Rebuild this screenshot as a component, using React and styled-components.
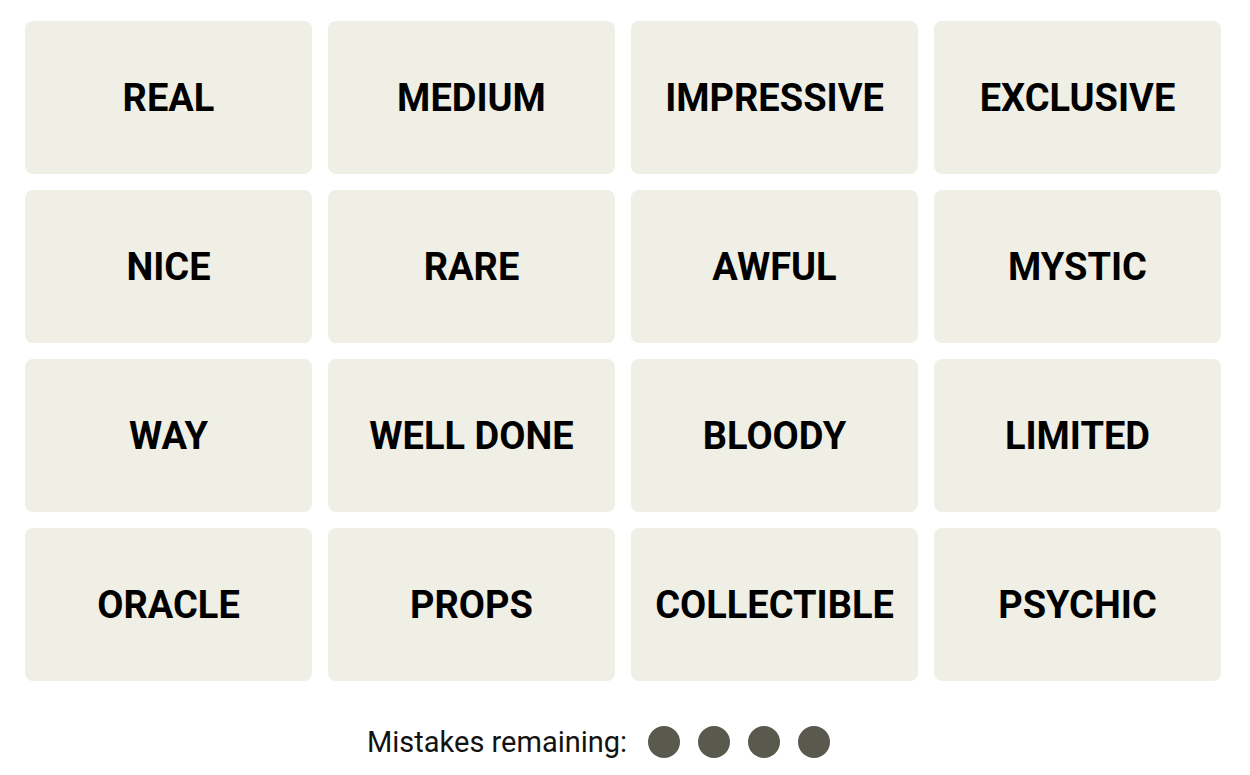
import React from 'react';
import styled, { createGlobalStyle } from 'styled-components';

const GlobalStyle = createGlobalStyle`
  body {
    margin: 0;
    background: #ffffff;
    font-family: 'Roboto', 'Liberation Sans', sans-serif;
  }
`;

const Page = styled.div`
  width: 1250px;
  height: 775px;
  padding: 21px 0 0 25px;
  box-sizing: border-box;
`;

const Board = styled.div`
  display: grid;
  grid-template-columns: repeat(4, 287px);
  grid-auto-rows: 153px;
  gap: 16px;
`;

const Tile = styled.button`
  display: flex;
  align-items: center;
  justify-content: center;
  border: none;
  border-radius: 8px;
  background: #efefe6;
  color: #000;
  font-family: 'Roboto', 'Liberation Sans', sans-serif;
  font-weight: 700;
  font-size: 38px;
  text-transform: uppercase;
  padding: 0;
  cursor: pointer;
`;

const Footer = styled.div`
  display: flex;
  align-items: center;
  margin-top: 45px;
  padding-left: 342px;
  gap: 21px;
`;

const Label = styled.span`
  font-size: 29px;
  color: #121212;
  line-height: 32px;
`;

const Dots = styled.div`
  display: flex;
  gap: 18px;
`;

const Dot = styled.span`
  width: 32px;
  height: 32px;
  border-radius: 50%;
  background: #5a594e;
`;

const words = [
  'REAL', 'MEDIUM', 'IMPRESSIVE', 'EXCLUSIVE',
  'NICE', 'RARE', 'AWFUL', 'MYSTIC',
  'WAY', 'WELL DONE', 'BLOODY', 'LIMITED',
  'ORACLE', 'PROPS', 'COLLECTIBLE', 'PSYCHIC',
];

export default function App() {
  return (
    <>
      <GlobalStyle />
      <Page>
        <Board>
          {words.map((w) => (
            <Tile key={w}>{w}</Tile>
          ))}
        </Board>
        <Footer>
          <Label>Mistakes remaining:</Label>
          <Dots>
            {[0, 1, 2, 3].map((i) => (
              <Dot key={i} />
            ))}
          </Dots>
        </Footer>
      </Page>
    </>
  );
}
